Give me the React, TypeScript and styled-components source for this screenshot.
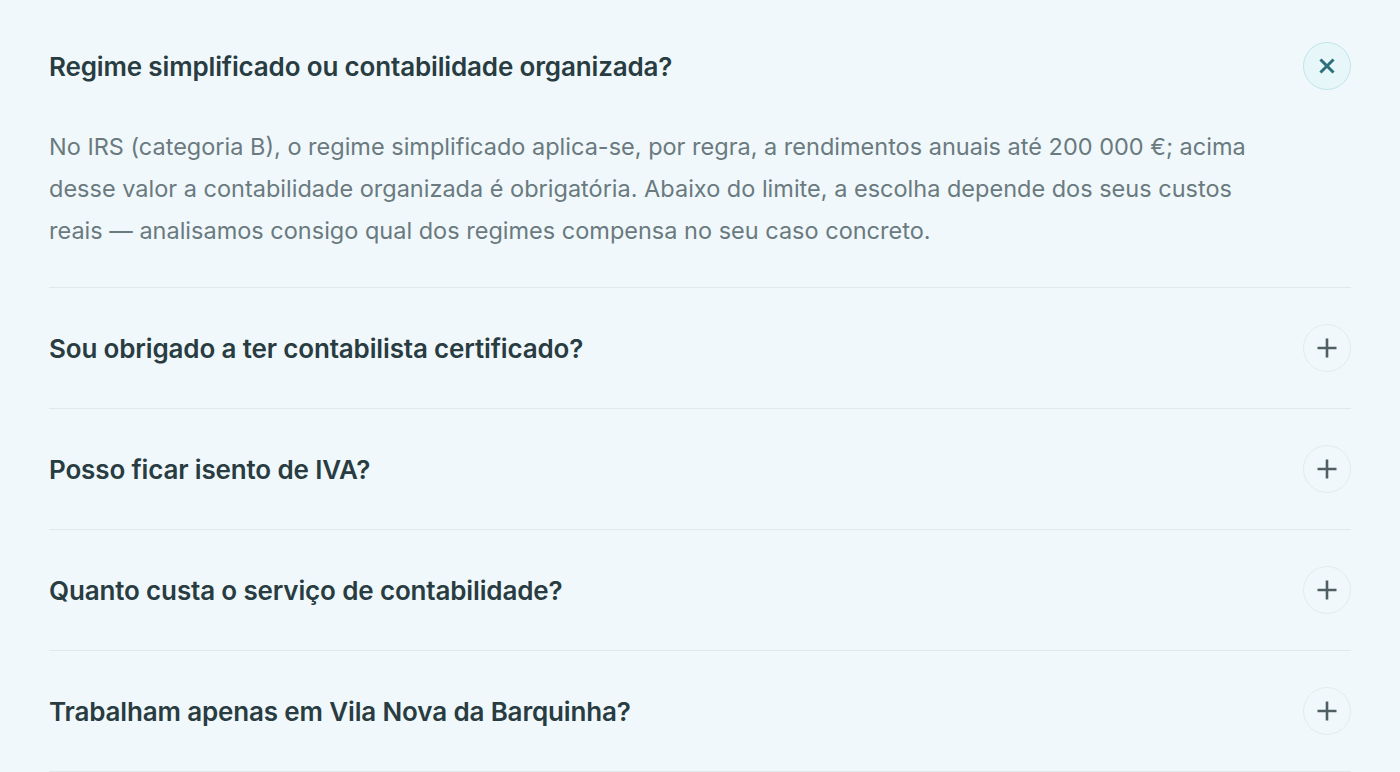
import React, { useState } from "react";
import styled, { createGlobalStyle } from "styled-components";

const Global = createGlobalStyle`
  html, body { margin: 0; padding: 0; background: #f0f8fb; }
  body { font-family: Inter, "Noto Sans", sans-serif; -webkit-font-smoothing: antialiased; }
`;

const Page = styled.div`
  padding: 6px 49px 0 49px;
  background: #f0f8fb;
  min-height: 772px;
  box-sizing: border-box;
`;

const List = styled.div`
  display: flex;
  flex-direction: column;
`;

const Item = styled.div`
  border-bottom: 1px solid #dfe9ec;
`;

const Header = styled.button`
  all: unset;
  box-sizing: border-box;
  width: 100%;
  display: flex;
  align-items: center;
  justify-content: space-between;
  padding: 36px 0;
  cursor: pointer;
`;

const Question = styled.span`
  font-size: 26px;
  font-weight: 600;
  color: #283c41;
  letter-spacing: -0.15px;
`;

const Toggle = styled.span<{ $open: boolean }>`
  width: 48px;
  height: 48px;
  box-sizing: border-box;
  border-radius: 50%;
  display: flex;
  align-items: center;
  justify-content: center;
  flex-shrink: 0;
  border: 1.5px solid ${(p) => (p.$open ? "#bfe6ec" : "#e2ebee")};
  background: ${(p) => (p.$open ? "#e6f6f9" : "transparent")};
  color: ${(p) => (p.$open ? "#2d6f7a" : "#4f5f64")};
`;

const Answer = styled.p`
  margin: 0;
  padding: 0 100px 35px 0;
  font-size: 23.5px;
  line-height: 42px;
  color: #6a7a7f;
`;

const faqs = [
  {
    q: "Regime simplificado ou contabilidade organizada?",
    a: "No IRS (categoria B), o regime simplificado aplica-se, por regra, a rendimentos anuais até 200 000 €; acima desse valor a contabilidade organizada é obrigatória. Abaixo do limite, a escolha depende dos seus custos reais — analisamos consigo qual dos regimes compensa no seu caso concreto.",
  },
  { q: "Sou obrigado a ter contabilista certificado?", a: "" },
  { q: "Posso ficar isento de IVA?", a: "" },
  { q: "Quanto custa o serviço de contabilidade?", a: "" },
  { q: "Trabalham apenas em Vila Nova da Barquinha?", a: "" },
];

const Icon = ({ open }: { open: boolean }) =>
  open ? (
    <svg width="20" height="20" viewBox="0 0 20 20" fill="none" stroke="currentColor" strokeWidth="3" strokeLinecap="square">
      <path d="M4.5 4.5 L15.5 15.5 M15.5 4.5 L4.5 15.5" />
    </svg>
  ) : (
    <svg width="22" height="22" viewBox="0 0 22 22" fill="none" stroke="currentColor" strokeWidth="2.6">
      <path d="M11 1.5 V20.5 M1.5 11 H20.5" />
    </svg>
  );

export default function App() {
  const [open, setOpen] = useState(0);
  return (
    <Page>
      <Global />
      <List>
        {faqs.map((f, i) => (
          <Item key={i}>
            <Header onClick={() => setOpen(open === i ? -1 : i)}>
              <Question>{f.q}</Question>
              <Toggle $open={open === i}>
                <Icon open={open === i} />
              </Toggle>
            </Header>
            {open === i && f.a && <Answer>{f.a}</Answer>}
          </Item>
        ))}
      </List>
    </Page>
  );
}
